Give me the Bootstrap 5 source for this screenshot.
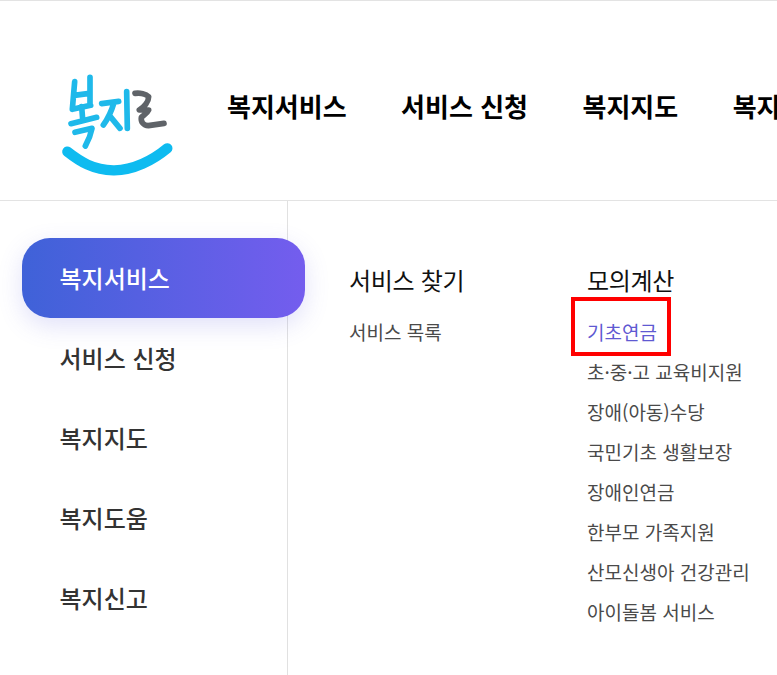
<!DOCTYPE html>
<html lang="ko">
<head>
<meta charset="utf-8">
<title>복지로</title>
<link rel="stylesheet" href="https://cdn.jsdelivr.net/npm/bootstrap@5.3.0/dist/css/bootstrap.min.css">
<style>
html,body{height:675px;overflow:hidden;background:#fff}
body{font-family:"Noto Sans CJK KR","Noto Sans",sans-serif;color:#111}
.page-top{height:201px;border-top:1px solid #e3e3e3;border-bottom:1px solid #e3e3e3;padding-left:40px;overflow:hidden;white-space:nowrap}
.logo-box{width:150px;height:130px;margin-top:59px;flex:none}
.logo-box svg{display:block}
.gnb{margin:89px 0 0 37px;gap:54.5px;font-size:26px;font-weight:700;line-height:32px;color:#000;flex:none}
.gnb span{flex:none}
.lower{height:474px}
.side-col{width:288px;flex:none;border-right:1px solid #e1e1e1;height:100%;padding-top:37px;padding-left:22px;position:relative}
.side-item{width:283px;height:80px;border-radius:28px;padding-left:37.5px;font-size:24px;font-weight:500;color:#333;line-height:80px;flex:none}
.side-item.on{background:linear-gradient(90deg,#3f62d8,#745dee);color:#fff;box-shadow:0 8px 24px rgba(90,90,220,.18);position:relative}
.sub-col{padding-top:63px;flex:none}
.sub-a{margin-left:61px;width:238px}
.sub-h{font-size:24px;font-weight:400;letter-spacing:-.3px;line-height:32px;color:#111}
.sub-l{font-size:19px;line-height:40px;color:#4a4a4a;white-space:nowrap}
.sub-l.cur{color:#5f5ad2}
.sel-box{position:absolute;left:-16px;top:-15px;width:100px;height:59px;border:4px solid #f00;pointer-events:none}
.sub-wrap{position:relative}
.sub-first{margin-top:16px}
</style>
</head>
<body>
<header class="page-top d-flex align-items-start">
  <div class="logo-box">
    <svg width="150" height="130" viewBox="0 0 450 390" fill="none" stroke-linecap="round" stroke-linejoin="round">
      <g stroke="#1fb9ea" stroke-width="17">
        <path d="M104 65 97 148 152 136M150 52V135M103 106 148 100"/>
        <path d="M125 140 128 178M93 191 170 172"/>
        <path d="M105 217 156 205C152 225 145 242 136 258"/>
        <path d="M185 131 236 124M222 128C214 155 204 176 190 195M208 166 240 205"/>
        <path d="M260 95 262 205"/>
      </g>
      <path d="M285 100C300 98 318 102 326 110 326 125 312 142 298 150H326C322 160 310 165 304 172 302 185 310 197 325 197L372 190" stroke="#5f6368" stroke-width="17"/>
      <path d="M82 275C120 305 160 330 220 331 280 332 340 300 382 265" stroke="#0ebbf0" stroke-width="31"/>
    </svg>
  </div>
  <nav class="gnb d-flex">
    <span>복지서비스</span><span>서비스 신청</span><span>복지지도</span><span>복지도움</span>
  </nav>
</header>
<main class="lower d-flex">
  <aside class="side-col d-flex flex-column">
    <div class="side-item on">복지서비스</div>
    <div class="side-item">서비스 신청</div>
    <div class="side-item">복지지도</div>
    <div class="side-item">복지도움</div>
    <div class="side-item">복지신고</div>
  </aside>
  <section class="sub-col sub-a">
    <div class="sub-h">서비스 찾기</div>
    <div class="sub-l sub-first">서비스 목록</div>
  </section>
  <section class="sub-col">
    <div class="sub-h">모의계산</div>
    <div class="sub-wrap sub-first">
      <div class="sub-l cur">기초연금</div>
      <div class="sel-box"></div>
      <div class="sub-l">초·중·고 교육비지원</div>
      <div class="sub-l">장애(아동)수당</div>
      <div class="sub-l">국민기초 생활보장</div>
      <div class="sub-l">장애인연금</div>
      <div class="sub-l">한부모 가족지원</div>
      <div class="sub-l">산모신생아 건강관리</div>
      <div class="sub-l">아이돌봄 서비스</div>
    </div>
  </section>
</main>
</body>
</html>
